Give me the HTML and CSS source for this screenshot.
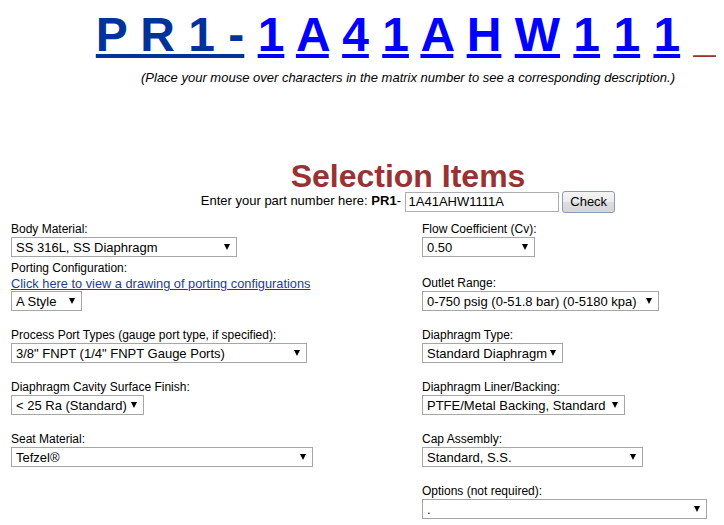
FILE: index.html
```html
<!DOCTYPE html>
<html lang="en">

<head>
    <meta charset="UTF-8">
    <meta name="viewport" content="width=device-width, initial-scale=1.0">
    <title>PR1 Part Number Builder</title>
    <link rel="stylesheet" href="styles.css">
</head>

<body>
    <div class="page">
        <div class="matrix">
            <a href="#" class="prefix">P R 1 -</a>
            <a href="#" class="code">1</a>
            <a href="#" class="code">A</a>
            <a href="#" class="code">4</a>
            <a href="#" class="code">1</a>
            <a href="#" class="code">A</a>
            <a href="#" class="code">H</a>
            <a href="#" class="code">W</a>
            <a href="#" class="code">1</a>
            <a href="#" class="code">1</a>
            <a href="#" class="code">1</a>
            <span class="blank">_</span>
        </div>
        <p class="note">(Place your mouse over characters in the matrix number to see a corresponding description.)</p>

        <div class="title">Selection Items</div>
        <form class="check-row">
            Enter your part number here: <b>PR1</b>- <input type="text" class="part-input" value="1A41AHW1111A"> <button type="button" class="check-btn">Check</button>
        </form>

        <div class="options">
            <div class="row">
                <div class="cell">
                    <label>Body Material:</label>
                    <span class="pick"><select class="sel-body"><option>SS 316L, SS Diaphragm</option></select></span>
                </div>
                <div class="cell">
                    <label>Flow Coefficient (Cv):</label>
                    <span class="pick"><select class="sel-flow"><option>0.50</option></select></span>
                </div>
            </div>
            <div class="row tight">
                <div class="cell">
                    <label>Porting Configuration:</label>
                    <a href="#" class="drawing-link">Click here to view a drawing of porting configurations</a>
                    <span class="pick"><select class="sel-porting"><option>A Style</option></select></span>
                </div>
                <div class="cell">
                    <label>Outlet Range:</label>
                    <span class="pick"><select class="sel-outlet"><option>0-750 psig (0-51.8 bar) (0-5180 kpa)</option></select></span>
                </div>
            </div>
            <div class="row">
                <div class="cell">
                    <label>Process Port Types (gauge port type, if specified):</label>
                    <span class="pick"><select class="sel-ports"><option>3/8" FNPT (1/4" FNPT Gauge Ports)</option></select></span>
                </div>
                <div class="cell">
                    <label>Diaphragm Type:</label>
                    <span class="pick"><select class="sel-diaphragm"><option>Standard Diaphragm</option></select></span>
                </div>
            </div>
            <div class="row">
                <div class="cell">
                    <label>Diaphragm Cavity Surface Finish:</label>
                    <span class="pick"><select class="sel-finish"><option>&lt; 25 Ra (Standard)</option></select></span>
                </div>
                <div class="cell">
                    <label>Diaphragm Liner/Backing:</label>
                    <span class="pick"><select class="sel-liner"><option>PTFE/Metal Backing, Standard</option></select></span>
                </div>
            </div>
            <div class="row">
                <div class="cell">
                    <label>Seat Material:</label>
                    <span class="pick"><select class="sel-seat"><option>Tefzel&reg;</option></select></span>
                </div>
                <div class="cell">
                    <label>Cap Assembly:</label>
                    <span class="pick"><select class="sel-cap"><option>Standard, S.S.</option></select></span>
                </div>
            </div>
            <div class="row">
                <div class="cell"></div>
                <div class="cell">
                    <label>Options (not required):</label>
                    <span class="pick"><select class="sel-extra"><option>.</option></select></span>
                </div>
            </div>
        </div>
    </div>
</body>

</html>
```

FILE: styles.css
```css
html {
    width: 100%;
}

body {
    margin: 8px;
    overflow-x: hidden;
    font-family: Arial, "Liberation Sans", sans-serif;
    font-size: 13px;
    color: #000000;
    background-color: #ffffff;
}

.page {
    width: 800px;
}

/* matrix number */
.matrix {
    text-align: center;
    white-space: nowrap;
    font-size: 48px;
    font-weight: 700;
    line-height: 54px;
}

.matrix a {
    text-decoration: underline;
}

.prefix {
    color: #003399;
}

.code {
    color: #0000ff;
}

.blank {
    color: #993333;
}

.note {
    margin: 8px 0 0 0;
    text-align: center;
    font-style: italic;
    font-size: 13px;
    line-height: 15px;
}

/* selection header */
.title {
    margin-top: 78px;
    text-align: center;
    font-size: 32px;
    font-weight: 700;
    line-height: 27px;
    color: #993333;
}

.check-row {
    margin: 0;
    height: 22px;
    line-height: 22px;
    text-align: center;
    font-size: 13px;
}

.part-input {
    box-sizing: border-box;
    width: 154px;
    height: 20px;
    margin: 0;
    padding: 0 3px;
    border: 1px solid #abadb3;
    font-family: Arial, "Liberation Sans", sans-serif;
    font-size: 13px;
    vertical-align: middle;
}

.check-btn {
    box-sizing: border-box;
    width: 53px;
    height: 22px;
    margin: 0;
    padding: 0;
    border: 1px solid #8a9bb3;
    border-radius: 3px;
    background: linear-gradient(#f4f4f4, #ececec 50%, #dddddd 51%, #d6d6d6);
    font-family: Arial, "Liberation Sans", sans-serif;
    font-size: 13px;
    color: #000000;
    vertical-align: middle;
}

/* form grid */
.options {
    margin-top: 10px;
    padding-left: 3px;
}

.row {
    display: grid;
    grid-template-columns: 411px 1fr;
    align-items: end;
    margin-top: 17px;
}

.row:first-child {
    margin-top: 0;
}

.row.tight {
    margin-top: 4px;
}

.cell label,
.drawing-link {
    display: block;
    font-size: 12px;
    line-height: 15px;
}

.drawing-link {
    font-size: 12.8px;
    color: #1a3f91;
    text-decoration: underline;
}

.pick {
    position: relative;
    display: inline-block;
    vertical-align: top;
}

.pick::after {
    content: "";
    position: absolute;
    right: 7px;
    top: 7px;
    border-left: 3.5px solid transparent;
    border-right: 3.5px solid transparent;
    border-top: 6px solid #000000;
    pointer-events: none;
}

select {
    -webkit-appearance: none;
    appearance: none;
    box-sizing: border-box;
    display: block;
    height: 20px;
    margin: 0;
    padding: 0 2px 0 4px;
    border: 1px solid #a6a6a6;
    border-radius: 0;
    background-color: #ffffff;
    font-family: Arial, "Liberation Sans", sans-serif;
    font-size: 13px;
    color: #000000;
}

.sel-body {
    width: 226px;
}

.sel-flow {
    width: 113px;
}

.sel-porting {
    width: 71px;
}

.sel-outlet {
    width: 237px;
}

.sel-ports {
    width: 296px;
}

.sel-diaphragm {
    width: 141px;
}

.sel-finish {
    width: 133px;
}

.sel-liner {
    width: 203px;
}

.sel-seat {
    width: 302px;
}

.sel-cap {
    width: 221px;
}

.sel-extra {
    width: 285px;
}
```
